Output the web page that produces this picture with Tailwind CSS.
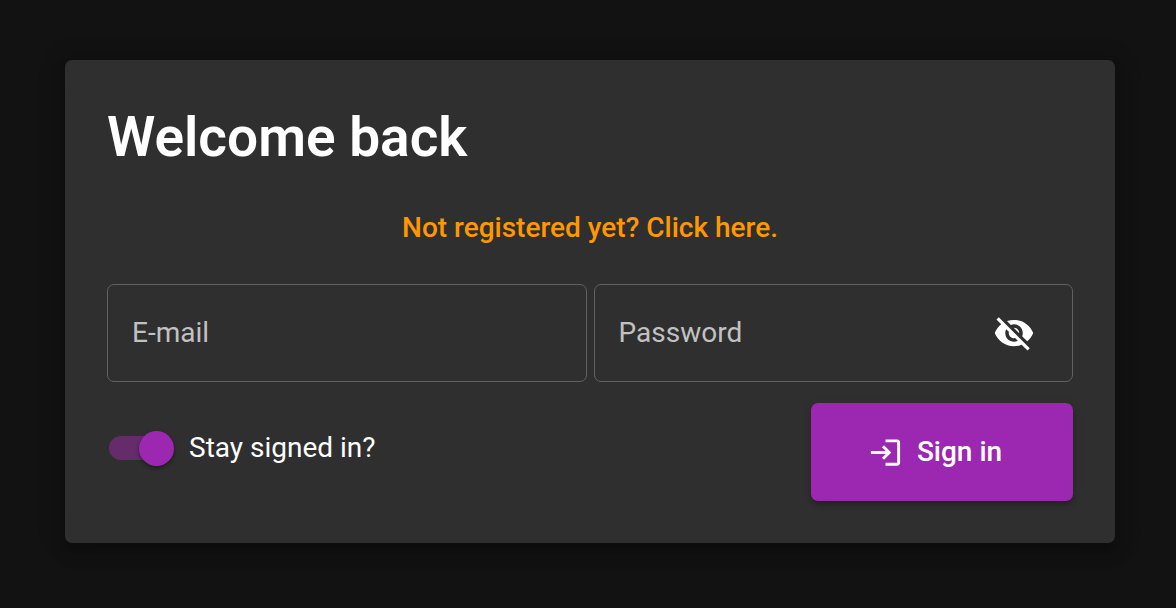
<!DOCTYPE html>
<html lang="en">
<head>
<meta charset="utf-8">
<meta name="viewport" content="width=device-width, initial-scale=1">
<title>Welcome back</title>
<script src="https://cdn.jsdelivr.net/npm/@tailwindcss/browser@4"></script>
</head>
<body class="min-h-screen bg-[#121212] pt-[60px] pr-[61px] pb-16 pl-[65px] font-['Roboto',sans-serif] text-[28px] leading-[42px] text-white">
  <main class="rounded-[7px] bg-[#2f2f2f] p-[42px] shadow-[0_5px_9px_-2px_rgba(0,0,0,0.2),0_10px_18px_rgba(0,0,0,0.14),0_2px_32px_rgba(0,0,0,0.12)]">
    <h1 class="text-[55px] leading-[70px] font-semibold">Welcome back</h1>
    <form class="mt-[35px]" onsubmit="return false">
      <p class="text-center"><a href="#register" class="font-medium text-[#ff9800]">Not registered yet? Click here.</a></p>
      <div class="mt-[35px] grid grid-cols-1 gap-[7px] sm:grid-cols-2">
        <div class="relative flex h-[98px] rounded-[7px] border border-[#616161]">
          <input id="email" type="email" placeholder=" " class="peer min-w-0 flex-1 bg-transparent px-6 outline-none">
          <label for="email" class="pointer-events-none absolute inset-y-0 left-6 flex items-center text-[#c1c1c1] peer-focus:hidden peer-[:not(:placeholder-shown)]:hidden">E-mail</label>
        </div>
        <div class="relative flex h-[98px] items-center rounded-[7px] border border-[#616161] pr-[25px]">
          <input id="password" type="password" placeholder=" " class="peer h-full min-w-0 flex-1 bg-transparent px-6 outline-none">
          <label for="password" class="pointer-events-none absolute inset-y-0 left-6 flex items-center text-[#c1c1c1] peer-focus:hidden peer-[:not(:placeholder-shown)]:hidden">Password</label>
          <button type="button" aria-label="Show password" class="rounded-full p-3">
            <svg class="size-[42px]" viewBox="0 0 24 24" fill="currentColor" aria-hidden="true"><path d="M12 7c2.76 0 5 2.24 5 5 0 .65-.13 1.26-.36 1.83l2.92 2.92c1.51-1.26 2.7-2.89 3.43-4.75-1.73-4.39-6-7.5-11-7.5-1.4 0-2.74.25-3.98.7l2.16 2.16C10.74 7.13 11.35 7 12 7zM2 4.27l2.28 2.28.46.46C3.08 8.3 1.78 10.02 1 12c1.73 4.39 6 7.5 11 7.5 1.55 0 3.03-.3 4.38-.84l.42.42L19.73 22 21 20.73 3.27 3 2 4.27zM7.53 9.8l1.55 1.55c-.05.21-.08.43-.08.65 0 1.66 1.34 3 3 3 .22 0 .44-.03.65-.08l1.55 1.55c-.67.33-1.41.53-2.2.53-2.76 0-5-2.24-5-5 0-.79.2-1.53.53-2.2zm4.31-.78l3.15 3.15.02-.16c0-1.66-1.34-3-3-3l-.17.01z"/></svg>
          </button>
        </div>
      </div>
      <div class="mt-[21px] flex flex-wrap items-start justify-between gap-4">
        <label for="stay" class="flex h-[90px] items-center gap-[15px] pl-0.5">
          <input id="stay" type="checkbox" role="switch" checked class="relative h-6 w-[65px] appearance-none before:absolute before:inset-y-0 before:left-0 before:w-[60px] before:rounded-full before:bg-[#652c6b] after:absolute after:-top-[5px] after:left-0 after:size-[35px] after:rounded-full after:bg-[#9c27b0] after:shadow-[0_2px_4px_rgba(0,0,0,0.4)] checked:after:left-[30px]">
          <span>Stay signed in?</span>
        </label>
        <button type="submit" class="flex h-[98px] w-[262px] items-center justify-center gap-[14px] rounded-[7px] bg-[#9c27b0] pr-[14px] font-medium shadow-[0_5px_2px_-4px_rgba(0,0,0,0.2),0_4px_4px_rgba(0,0,0,0.14),0_2px_9px_rgba(0,0,0,0.12)]">
          <svg class="size-[35px]" viewBox="0 0 24 24" fill="currentColor" aria-hidden="true"><path d="M11 7 9.6 8.4l2.6 2.6H2v2h10.2l-2.6 2.6L11 17l5-5-5-5zm9 12h-8v2h8c1.1 0 2-.9 2-2V5c0-1.1-.9-2-2-2h-8v2h8v14z"/></svg>
          Sign in
        </button>
      </div>
    </form>
  </main>
</body>
</html>
